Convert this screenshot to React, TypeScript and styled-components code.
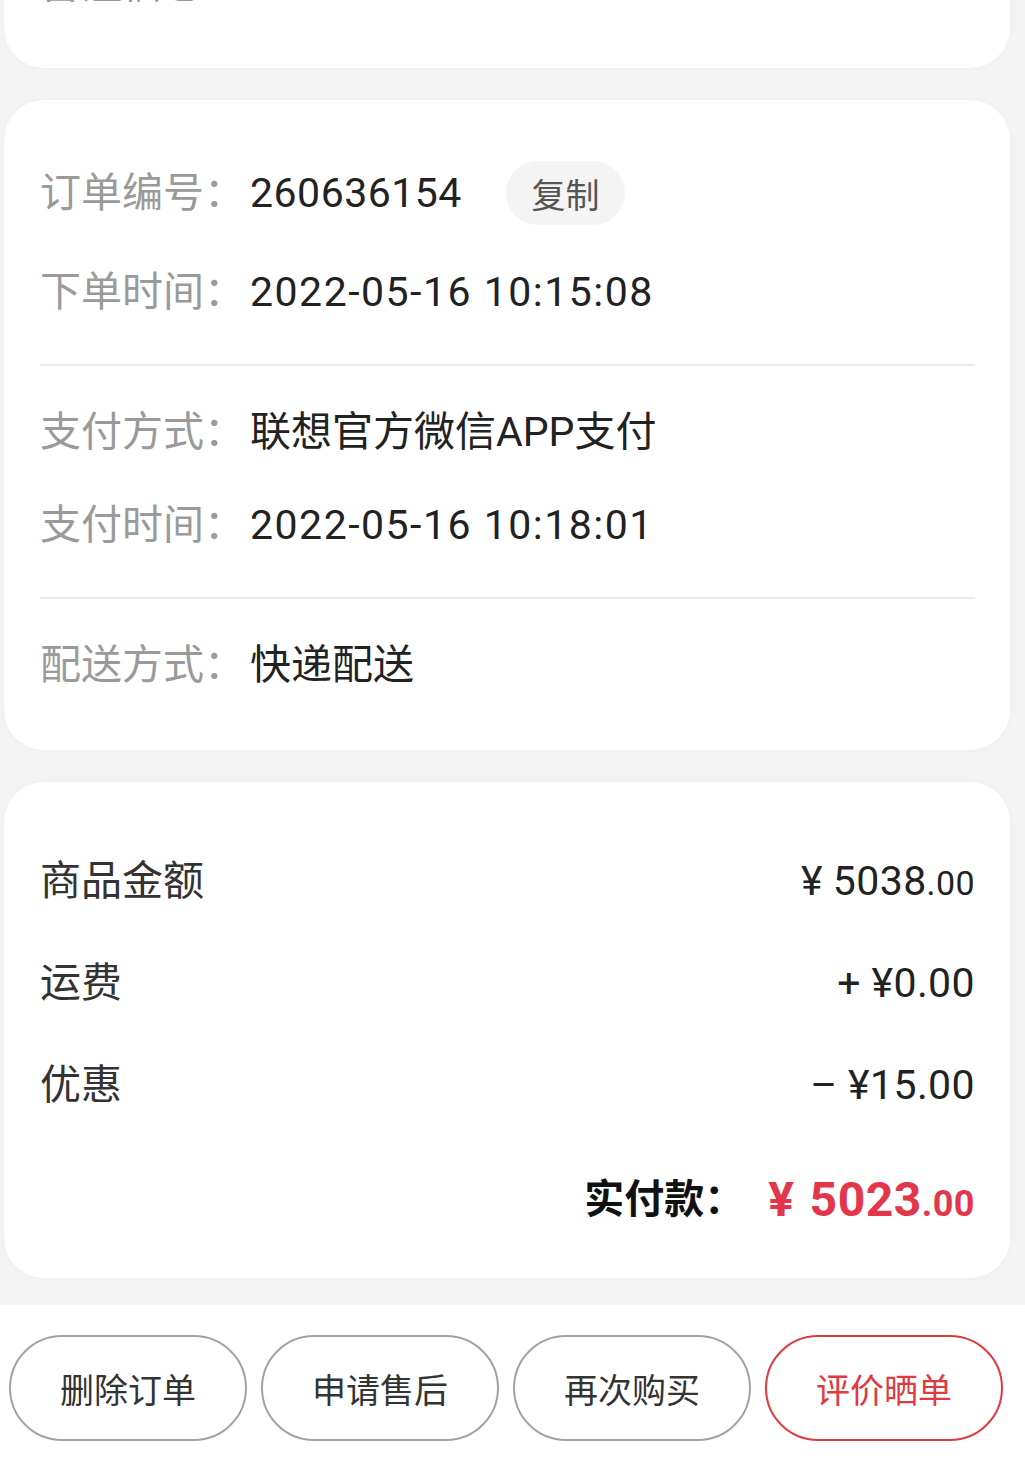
import React from "react";
import styled, { createGlobalStyle } from "styled-components";

const Global = createGlobalStyle`
  html, body { margin: 0; padding: 0; background: #f4f4f4; }
  body { font-family: Roboto, "Noto Sans CJK SC", "Noto Sans", sans-serif; -webkit-font-smoothing: antialiased; }
  #root { overflow: hidden; }
`;

const Page = styled.div`
  width: 1025px;
  height: 1469px;
  display: flex;
  flex-direction: column;
  background: #f4f4f4;
  overflow: hidden;
`;

const Card = styled.section<{ $mt?: number }>`
  margin: ${(p) => p.$mt ?? 32}px 15px 0 4px;
  background: #ffffff;
  border-radius: 40px;
  box-shadow: 0 0 6px rgba(0, 0, 0, 0.03);
  padding: 0 35px 0 36px;
  display: flex;
  flex-direction: column;
`;

const Section = styled.div<{ $pt: number; $pb: number; $gap?: number }>`
  display: flex;
  flex-direction: column;
  padding: ${(p) => p.$pt}px 0 ${(p) => p.$pb}px;
  gap: ${(p) => p.$gap ?? 0}px;
`;

const Divider = styled.div`
  height: 2px;
  background: #ececec;
`;

const InfoRow = styled.div`
  height: 64px;
  display: flex;
  align-items: center;
  font-size: 41px;
  line-height: 1;
`;

const Label = styled.span`
  width: 210px;
  flex: none;
  color: #9a9a9a;
`;

const Value = styled.span<{ $spacing?: number }>`
  color: #222222;
  letter-spacing: ${(p) => p.$spacing ?? 0.5}px;
`;

const CopyButton = styled.button`
  margin-left: 44px;
  width: 119px;
  height: 64px;
  border: none;
  border-radius: 32px;
  background: #f4f4f4;
  color: #555555;
  font-family: inherit;
  font-size: 34px;
  padding: 0;
`;

const AmountRow = styled.div`
  height: 64px;
  display: flex;
  align-items: center;
  justify-content: space-between;
  font-size: 41px;
  line-height: 1;
  color: #333333;
`;

const Money = styled.span`
  color: #222222;
  display: inline-flex;
  align-items: baseline;
  letter-spacing: 0.4px;
`;

const Cents = styled.span<{ $size?: number }>`
  font-size: ${(p) => p.$size ?? 34}px;
`;

const TotalRow = styled.div`
  height: 64px;
  margin-top: 13px;
  display: flex;
  align-items: center;
  justify-content: flex-end;
  line-height: 1;
`;

const TotalLabel = styled.span`
  font-size: 40px;
  font-weight: 700;
  color: #111111;
  margin-right: 24px;
`;

const TotalPrice = styled.span`
  color: #e3364b;
  font-weight: 700;
  font-size: 48px;
  display: inline-flex;
  align-items: baseline;
  letter-spacing: 0.5px;
`;

const Yen = styled.span<{ $gap: number }>`
  margin-right: ${(p) => p.$gap}px;
`;

const Footer = styled.div`
  margin-top: 27px;
  flex: 1;
  background: #ffffff;
  display: grid;
  grid-template-columns: repeat(4, 238px);
  column-gap: 14px;
  align-content: start;
  padding: 30px 0 0 9px;
`;

const ActionButton = styled.button<{ $primary?: boolean }>`
  height: 106px;
  border-radius: 53px;
  border: 2px solid ${(p) => (p.$primary ? "#e0393f" : "#a3a3a3")};
  background: #ffffff;
  color: ${(p) => (p.$primary ? "#e0393f" : "#333333")};
  font-family: inherit;
  font-size: 34px;
  padding: 0;
`;

export default function App() {
  return (
    <Page>
      <Global />
      <Card $mt={-88}>
        <Section $pt={40} $pb={52}>
          <InfoRow>
            <Label>备注信息</Label>
          </InfoRow>
        </Section>
      </Card>

      <Card>
        <Section $pt={61} $pb={40} $gap={35}>
          <InfoRow>
            <Label>订单编号：</Label>
            <Value>260636154</Value>
            <CopyButton>复制</CopyButton>
          </InfoRow>
          <InfoRow>
            <Label>下单时间：</Label>
            <Value $spacing={1.5}>2022-05-16 10:15:08</Value>
          </InfoRow>
        </Section>
        <Divider />
        <Section $pt={34} $pb={40} $gap={29}>
          <InfoRow>
            <Label>支付方式：</Label>
            <Value $spacing={0}>联想官方微信APP支付</Value>
          </InfoRow>
          <InfoRow>
            <Label>支付时间：</Label>
            <Value $spacing={1.5}>2022-05-16 10:18:01</Value>
          </InfoRow>
        </Section>
        <Divider />
        <Section $pt={34} $pb={53}>
          <InfoRow>
            <Label>配送方式：</Label>
            <Value $spacing={0}>快递配送</Value>
          </InfoRow>
        </Section>
      </Card>

      <Card>
        <Section $pt={67} $pb={46} $gap={38}>
          <AmountRow>
            <span>商品金额</span>
            <Money>
              <Yen $gap={10}>¥</Yen>5038<Cents>.00</Cents>
            </Money>
          </AmountRow>
          <AmountRow>
            <span>运费</span>
            <Money>+ ¥0.00</Money>
          </AmountRow>
          <AmountRow>
            <span>优惠</span>
            <Money>– ¥15.00</Money>
          </AmountRow>
          <TotalRow>
            <TotalLabel>实付款：</TotalLabel>
            <TotalPrice>
              <Yen $gap={15}>¥</Yen>5023<Cents $size={36}>.00</Cents>
            </TotalPrice>
          </TotalRow>
        </Section>
      </Card>

      <Footer>
        <ActionButton>删除订单</ActionButton>
        <ActionButton>申请售后</ActionButton>
        <ActionButton>再次购买</ActionButton>
        <ActionButton $primary>评价晒单</ActionButton>
      </Footer>
    </Page>
  );
}
